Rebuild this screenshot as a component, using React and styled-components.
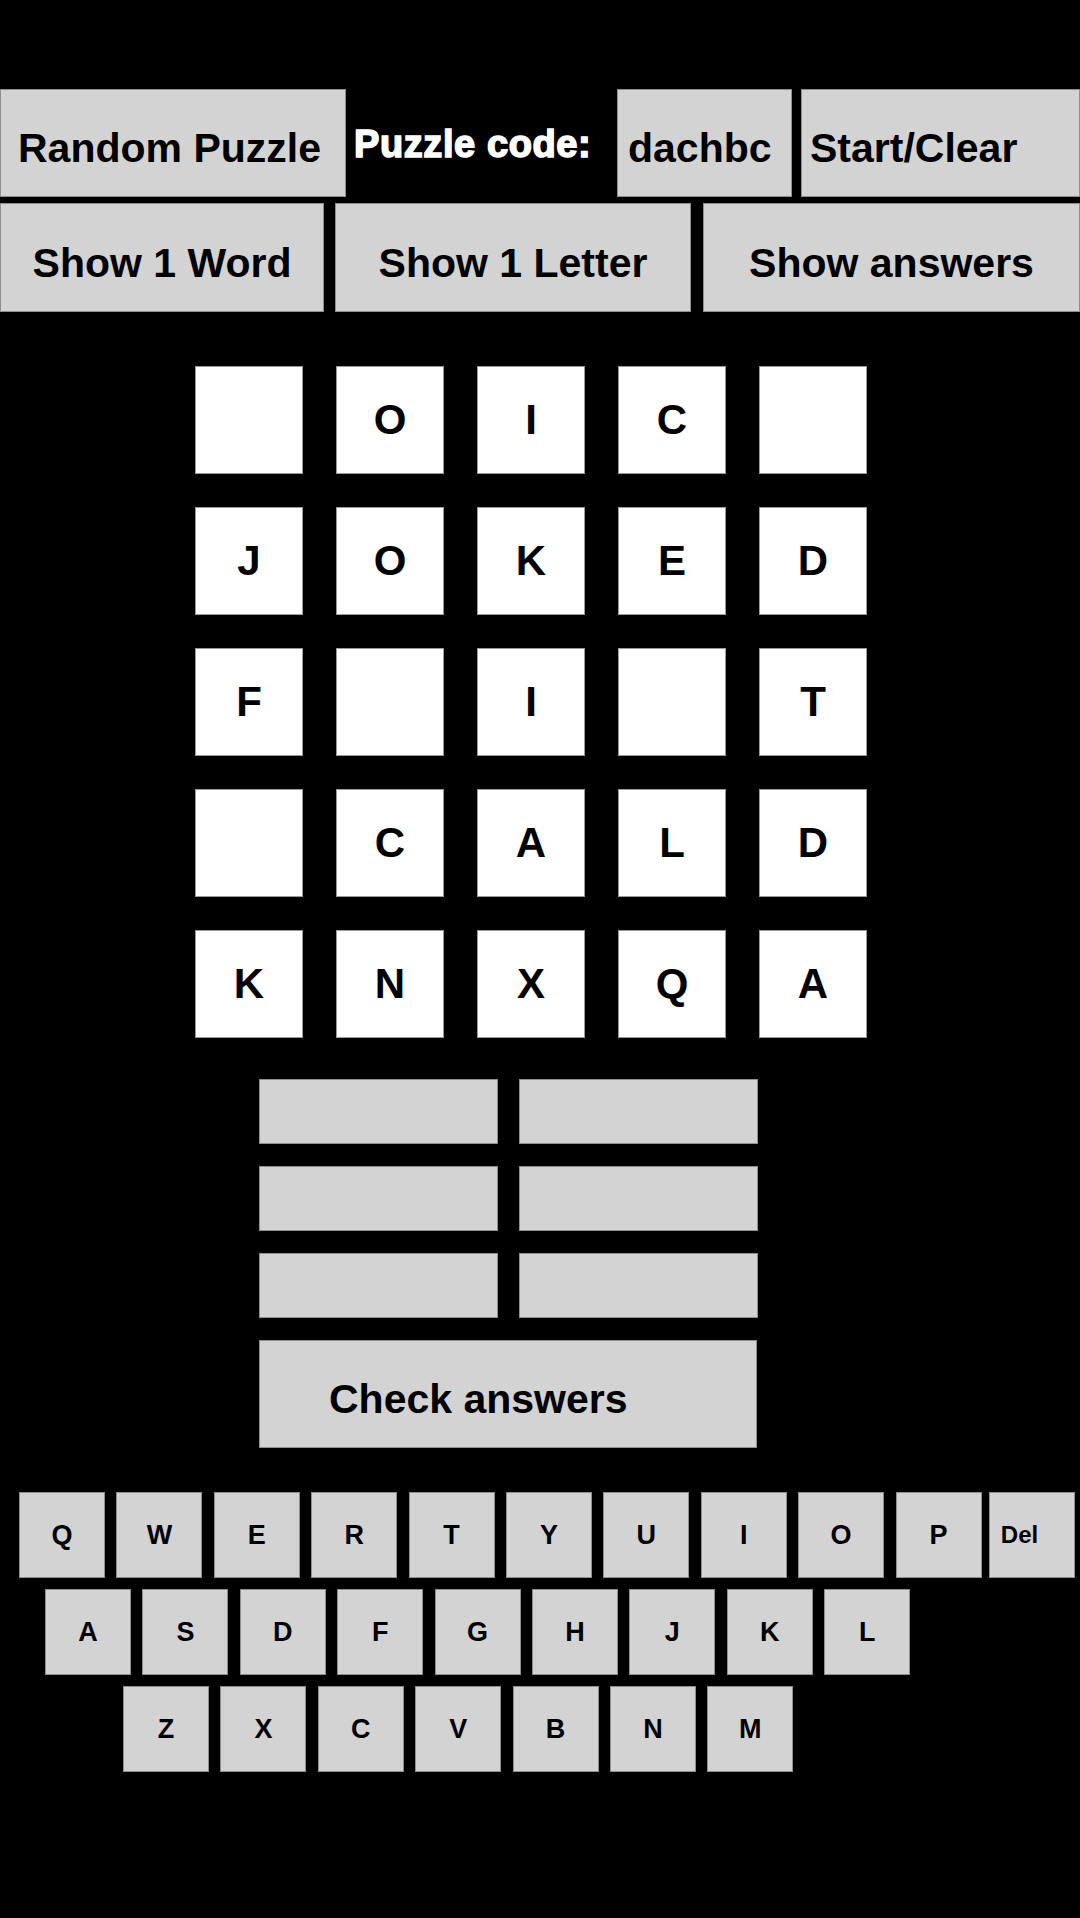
import React from 'react';
import styled, { createGlobalStyle } from 'styled-components';

const GlobalStyle = createGlobalStyle`
  html, body {
    margin: 0;
    padding: 0;
    background: #000;
  }
  body {
    font-family: "Liberation Sans", Arial, sans-serif;
    min-height: 1918px;
    overflow: hidden;
  }
`;

const Page = styled.div`
  width: 1080px;
  min-height: 1918px;
  background: #000;
  padding-top: 89px;
  box-sizing: border-box;
  overflow: hidden;
`;

const ButtonRow = styled.div`
  display: flex;
  align-items: stretch;
  height: ${(p) => p.h}px;
  margin-top: ${(p) => p.mt || 0}px;
`;

const GreyButton = styled.button`
  box-sizing: border-box;
  flex: ${(p) => (p.w ? `0 0 ${p.w}px` : '1 1 auto')};
  margin: 0 0 0 ${(p) => p.ml || 0}px;
  padding: 11px 0 0 ${(p) => p.pl || 0}px;
  display: flex;
  align-items: center;
  justify-content: ${(p) => (p.left ? 'flex-start' : 'center')};
  background: #d3d3d3;
  border: 1px solid #8e8e8e;
  border-radius: 0;
  color: #000;
  font-family: "Liberation Sans", Arial, sans-serif;
  font-weight: 700;
  font-size: 41px;
  white-space: nowrap;
  cursor: pointer;
`;

const CodeLabel = styled.span`
  flex: 0 0 249px;
  margin-left: 8px;
  padding-top: 2px;
  display: flex;
  align-items: center;
  color: #fff;
  font-family: "Liberation Sans", Arial, sans-serif;
  font-weight: 700;
  font-size: 38px;
  letter-spacing: 0.6px;
  -webkit-text-stroke: 1.6px #fff;
  white-space: nowrap;
`;

const Board = styled.div`
  display: grid;
  grid-template-columns: repeat(5, 108px);
  grid-auto-rows: 108px;
  gap: 33px;
  margin: 54px 0 0 195px;
`;

const Cell = styled.div`
  box-sizing: border-box;
  background: #fff;
  border: 1px solid #9a9a9a;
  display: flex;
  align-items: center;
  justify-content: center;
  font-weight: 700;
  font-size: 42px;
  color: #000;
`;

const Answers = styled.div`
  display: grid;
  grid-template-columns: repeat(2, 239px);
  grid-auto-rows: 65px;
  column-gap: 21px;
  row-gap: 22px;
  margin: 41px 0 0 259px;
`;

const AnswerBox = styled.div`
  box-sizing: border-box;
  background: #d3d3d3;
  border: 1px solid #8e8e8e;
`;

const CheckButton = styled(GreyButton)`
  width: 498px;
  height: 108px;
  margin: 22px 0 0 259px;
  padding-top: 10px;
`;

const Keyboard = styled.div`
  display: flex;
  flex-direction: column;
  gap: 11px;
  margin-top: 44px;
`;

const KeyRow = styled.div`
  display: flex;
  gap: 11.4px;
  padding-left: ${(p) => p.offset}px;
`;

const Key = styled.button`
  box-sizing: border-box;
  flex: 0 0 86px;
  height: 86px;
  margin: 0 0 0 ${(p) => (p.wide ? -4.4 : 0)}px;
  padding: 0 ${(p) => (p.wide ? 24 : 0)}px 0 0;
  display: flex;
  align-items: center;
  justify-content: center;
  background: #d3d3d3;
  border: 1px solid #8e8e8e;
  border-radius: 0;
  color: #000;
  font-family: "Liberation Sans", Arial, sans-serif;
  font-weight: 700;
  font-size: ${(p) => (p.wide ? 24 : 27)}px;
  cursor: pointer;
`;

const grid = [
  ['', 'O', 'I', 'C', ''],
  ['J', 'O', 'K', 'E', 'D'],
  ['F', '', 'I', '', 'T'],
  ['', 'C', 'A', 'L', 'D'],
  ['K', 'N', 'X', 'Q', 'A'],
];

const keyRows = [
  { offset: 19, keys: ['Q', 'W', 'E', 'R', 'T', 'Y', 'U', 'I', 'O', 'P', 'Del'] },
  { offset: 45, keys: ['A', 'S', 'D', 'F', 'G', 'H', 'J', 'K', 'L'] },
  { offset: 123, keys: ['Z', 'X', 'C', 'V', 'B', 'N', 'M'] },
];

const App = () => {
  return (
    <Page>
      <GlobalStyle />
      <ButtonRow h={108}>
        <GreyButton w={346} pl={17} left>Random Puzzle</GreyButton>
        <CodeLabel>Puzzle code:</CodeLabel>
        <GreyButton w={175} ml={14} pl={10} left>dachbc</GreyButton>
        <GreyButton ml={9} pl={8} left>Start/Clear</GreyButton>
      </ButtonRow>
      <ButtonRow h={109} mt={6}>
        <GreyButton w={324}>Show 1 Word</GreyButton>
        <GreyButton w={356} ml={11}>Show 1 Letter</GreyButton>
        <GreyButton ml={12}>Show answers</GreyButton>
      </ButtonRow>

      <Board>
        {grid.flat().map((ch, i) => (
          <Cell key={i}>{ch}</Cell>
        ))}
      </Board>

      <Answers>
        {Array.from({ length: 6 }).map((_, i) => (
          <AnswerBox key={i} />
        ))}
      </Answers>
      <CheckButton pl={69} left>Check answers</CheckButton>

      <Keyboard>
        {keyRows.map((row) => (
          <KeyRow key={row.offset} offset={row.offset}>
            {row.keys.map((k) => (
              <Key key={k} wide={k === 'Del'}>
                {k}
              </Key>
            ))}
          </KeyRow>
        ))}
      </Keyboard>
    </Page>
  );
};

export default App;
